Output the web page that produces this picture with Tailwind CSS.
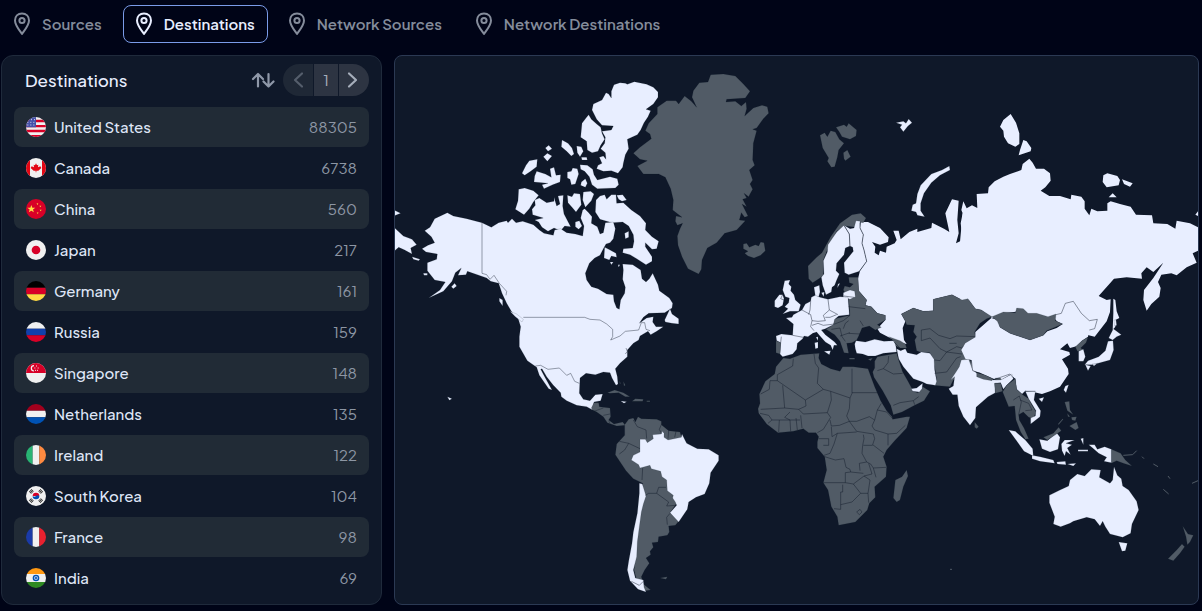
<!DOCTYPE html>
<html lang="en">

<head>
    <meta charset="UTF-8" />
    <meta name="viewport" content="width=device-width, initial-scale=1.0" />
    <title>Destinations</title>
    <script src="https://cdn.jsdelivr.net/npm/@tailwindcss/browser@4"></script>
</head>

<body class="min-h-screen flex flex-col bg-[#000417] font-['Plus_Jakarta_Sans','Inter',sans-serif] pl-px pr-[3px] pt-[5px] pb-[6px]">

    <nav id="tabs" class="flex gap-2 mb-3"></nav>

    <main class="flex-1 grid grid-cols-[381px_1fr] gap-3">

        <section class="rounded-xl border border-[#1f2a3b] bg-[#0f1829] px-3 pt-2 pb-1">
            <div class="flex items-center mb-[11px]">
                <h1 class="flex-1 pl-[11px] text-[17px] leading-8 font-medium text-[#e8eeff]">Destinations</h1>
                <button aria-label="Sort" class="mr-2 text-[#8f98a8]">
                    <svg class="w-6 h-6" viewBox="0 0 24 24" fill="none" stroke="currentColor" stroke-width="2.200" stroke-linecap="round" stroke-linejoin="round">
                        <path d="M7 18.500V6M2 11l5-5 5 5M17.500 6v12.500M12.500 13.500l5 5 5-5" />
                    </svg>
                </button>
                <div class="flex gap-px h-8 rounded-full overflow-hidden text-[#a5adba]">
                    <button aria-label="Previous page" disabled class="w-[30px] flex items-center justify-center bg-[#1f2836] text-[#555e6c]">
                        <svg class="w-5 h-5" viewBox="0 0 20 20" fill="none" stroke="currentColor" stroke-width="2.200" stroke-linecap="round" stroke-linejoin="round"><path d="M14 3.500L7 10l7 6.500" /></svg>
                    </button>
                    <button class="w-6 bg-[#2d3442] text-[15px]">1</button>
                    <button aria-label="Next page" class="w-[30px] flex items-center justify-center bg-[#2d3442]">
                        <svg class="w-5 h-5" viewBox="0 0 20 20" fill="none" stroke="currentColor" stroke-width="2.200" stroke-linecap="round" stroke-linejoin="round"><path d="M5 3.500l7 6.500-7 6.500" /></svg>
                    </button>
                </div>
            </div>
            <ul id="list" class="flex flex-col gap-px"></ul>
        </section>

        <section class="relative rounded-lg border border-[#2b3953] bg-[#0f1829] overflow-hidden">
            <svg class="absolute inset-0 w-full h-full" viewBox="1185 168 2409 1644" role="img" aria-label="World map" stroke-width="1" stroke="#0f1829" stroke-opacity=".45" stroke-linejoin="round">
                <!-- Canadian Arctic -->
                <g transform="translate(1170 150)" fill="#e8eeff">
                    <path d="M672 104L690 98 706 100 712 103 733 95 770 103 790 112 804 126 804 142 790 162 768 178 782 182 774 200 762 218 752 240 742 254 712 268 716 296 706 314 700 340 698 352 684 370 664 362 640 364 620 356 624 346 636 340 628 322 640 318 648 328 646 308 632 296 644 280 646 262 636 244 664 240 670 228 636 226 620 208 606 180 610 162 636 150 648 128 656 132 664 144 664 124Z" />
                    <path d="M596 194L604 208 620 222 632 232 636 250 644 268 632 286 624 304 606 308 592 300 590 274 572 262 576 220 588 204Z" />
                    <path d="M516 270L534 280 546 294 552 312 544 318 530 304 514 290ZM560 288L574 290 580 304 570 320 562 308ZM574 322L590 322 592 330 576 330ZM466 294L476 286 486 296 474 304ZM460 320L472 310 486 318 472 334Z" />
                    <path d="M418 332L442 328 440 350 422 364 404 376 396 370 408 346ZM440 364L466 372 484 382 480 356 492 352 498 376 512 374 510 396 488 404 462 416 456 404 474 400 432 396 434 378Z" />
                    <path d="M532 366L544 364 548 354 562 356 566 372 556 402 544 404 540 388 532 384ZM574 396L586 386 592 400 586 412 572 406Z" />
                    <path d="M570 344L592 346 608 358 612 374 622 390 660 380 682 386 686 404 676 414 622 416 606 404 598 380 584 364 572 358Z" />
                    <path d="M386 418L404 414 430 422 446 436 430 456 418 476 402 494 376 478 384 452Z" />
                    <path d="M434 450L448 444 470 458 492 454 492 442 500 468 510 462 504 438 520 436 518 468 522 492 542 530 524 528 512 542 492 534 474 544 456 532 446 516 434 510 460 504 428 494 426 478 436 466Z" />
                    <path d="M532 436L546 440 552 430 570 432 574 464 558 486 546 472 534 458ZM580 426L602 424 612 432 604 452 586 472 578 450ZM556 516L568 512 576 528 566 538 556 530Z" />
                    <path d="M12 480L32 490 12 498Z" />
                </g>
                <!-- Baffin Island -->
                <g transform="translate(1770 180)" fill="#e8eeff">
                    <path d="M18 420L30 408 44 404 50 418 64 404 78 404 80 430 100 428 124 450 150 468 168 490 166 510 186 530 206 544 200 566 186 568 166 548 166 560 186 590 186 604 168 614 140 596 120 584 98 578 100 566 128 564 132 544 130 524 116 498 98 486 66 488 30 478 16 456Z" />
                    <path d="M80 406L98 404 110 420 96 424 86 418ZM44 562L56 568 78 580 80 592 64 588 58 600 42 594ZM60 606H70L64 614ZM84 614H90L86 622Z" />
                    <path d="M104 520L116 514 116 532 106 536Z" />
                </g>
                <!-- Greenland, Iceland -->
                <g transform="translate(1770 180)" fill="#515b66">
                    <path d="M362 44L400 42 436 48 458 70 480 94 466 114 410 118 408 126 436 124 454 138 468 126 470 146 464 168 490 144 516 136 532 140 536 160 520 176 500 204 488 208 500 212 490 250 488 300 494 316 478 330 488 360 480 372 488 388 480 402 476 410 462 400 470 414 458 418 470 440 456 432 474 468 464 472 454 458 448 480 466 482 440 510 404 520 380 548 352 564 336 600 334 628 326 642 294 626 276 590 264 556 262 528 270 506 278 490 262 496 256 484 258 468 276 472 248 450 250 420 242 386 226 352 206 342 160 342 142 318 172 302 150 298 130 280 150 262 184 236 180 222 166 212 176 190 202 162 202 142 230 122 258 122 266 132 284 108 304 124 320 142 306 112 310 92 328 68 354 66Z" />
                    <path d="M460 552L470 550 478 562 496 554 506 558 512 546 522 548 526 572 512 586 492 594 474 588 464 580 474 574 460 566Z" />
                </g>
                <!-- North and Central America -->
                <g transform="translate(1170 690)" fill="#e8eeff">
                    <path d="M172-52L190-42 230-34 276-22 304-8 326-22 350-28 354-22 366-34 378-22 398-26 430-16 448 0 462 10 490 16 494 0 512-4 530 8 556 12 578 18 582-12 572-36 578-60 584-64 596-52 606-40 604-20 622-10 630 12 640 8 646-22 670-24 676-4 670 26 660 38 648 42 640 56 630 76 614 84 598 100 586 130 590 150 604 170 624 176 650 192 670 194 672 214 680 234 688 238 692 210 704 190 706 172 698 148 700 120 698 102 728 104 752 120 756 146 768 156 778 146 788 130 804 164 808 182 838 204 848 220 846 234 824 248 776 250 760 262 748 280 770 264 790 260 788 276 798 290 820 290 800 304 782 314 774 304 750 318 746 330 730 340 712 360 712 380 690 400 676 416 682 440 684 462 678 466 666 444 660 428 640 426 616 434 588 430 570 444 568 490 580 508 600 512 616 494 638 492 632 512 612 516 608 540 590 530 560 526 530 512 514 500 512 488 490 466 470 440 456 416 452 418 464 440 486 480 476 476 448 436 440 412 412 392 388 350 388 320 392 290 384 264 364 244 350 220 336 190 326 160 302 154 290 144 262 134 232 124 228 134 204 136 214 114 196 128 186 154 160 184 116 204 150 180 166 156 134 150 112 122 112 98 140 88 142 72 108 66 96 56 114 46 134 38 124 20 104 2 120-8 134-34Z" />
                    <path d="M12-8L40 18 66 28 80 44 62 54 66 72 44 60 26 52 12 64ZM184 170L194 160 200 168 190 176ZM66 80L90 88 86 92 70 88ZM100 130H112V136H102ZM328 204L338 210 338 228 328 214ZM360 244L380 252 400 268 396 276 376 260ZM824 270L840 236 846 252 866 266 866 282 846 280 826 276ZM172 500L186 506 178 511ZM692 513L710 515 702 520Z" />
                    <path fill="#515b66" d="M604 534L612 518 626 518 628 530 660 534 662 560 656 570 672 582 698 576 706 586 680 588 652 578 640 560 620 546 608 540ZM652 488L674 480 700 488 720 500 706 500 686 488 660 490ZM726 514L736 506 760 508 758 514ZM770 512H780V515H770ZM688 452L692 460 690 462ZM700 454L706 466 702 468Z" />
                    <path fill="none" stroke-width="3" stroke-opacity=".4" d="M276-22V130L290 134 300 148 312 136 328 160 350 184 348 196M400 262H584L600 268 630 270 650 282 668 298 668 320 662 330 690 318 706 304 746 300 754 278 764 278 768 298 780 302M436 408L452 406 474 418 508 414 530 436 542 430 554 454 568 460M708 354L712 364 706 372M612 544L640 534M640 556L660 552M656 572L660 580" />
                </g>
                <!-- South America -->
                <g transform="translate(1770 1140)" fill="#515b66">
                    <path d="M130 114L136 126 144 110 154 116 200 118 214 124 214 134 236 152 270 156 274 170 286 190 250 260 238 300 260 370 240 398 266 424 256 436 236 438 238 456 232 466 206 470 204 486 186 488 190 502 180 514 182 524 168 534 178 550 164 570 154 590 160 612 182 630 166 632 140 600 132 570 150 400 158 310 130 296 108 272 76 224 80 192 104 166 104 134 116 118ZM210 594L232 590 228 598Z" />
                    <path fill="#e8eeff" d="M150 178L166 178 172 188 190 176 188 164 214 162 216 154 222 160 222 172 234 180 274 172 276 162 286 182 290 190 322 206 356 208 386 226 386 242 362 278 358 310 344 342 318 352 296 366 292 388 266 426 240 398 260 376 256 366 248 354 250 346 232 332 230 300 216 290 212 274 184 266 180 256 150 264 146 254 124 240 130 226 150 216Z" />
                    <path fill="#e8eeff" d="M148 310L157 312 168 348 160 372 154 396 148 440 142 486 140 530 130 570 136 594 160 600 162 622 168 636 144 628 120 602 112 570 116 544 126 490 130 456 142 400 148 340Z" />
                    <path fill="none" stroke-width="3" d="M130 120L142 140 168 150 170 176M88 184L116 190 150 206M116 190L104 210 88 222M158 264L156 300M166 346L176 340 200 340 206 322 228 322M200 340L236 366 230 378 256 376M240 400L230 412 232 434M214 134L208 148 214 160M236 152L234 176M258 154L254 172M160 604L148 616 124 604" />
                </g>
                <!-- Svalbard and Russian Arctic islands -->
                <g transform="translate(2370 240)" fill="#e8eeff">
                    <path fill="#515b66" d="M90 166L104 158 112 170 122 152 136 156 148 178 162 190 146 210 142 232 134 260 124 262 112 244 116 234 98 204ZM138 142L162 134 170 140 176 130 200 150 198 168 180 178 156 170 148 156ZM160 218L172 210 182 230 166 242 162 236Z" />
                    <path d="M478 258L480 270 450 286 424 308 402 340 392 370 392 392 404 410 382 406 378 396 364 392 368 374 378 370 382 342 392 316 424 282 456 270ZM318 128L340 124 348 130 356 117 366 128 354 138 340 155 330 142 336 134Z" />
                </g>
                <!-- Russia -->
                <g fill="#e8eeff" stroke="none">
                    <path transform="translate(2220 600)" d="M362 66L384 66 420 84 446 112 444 126 420 134 396 126 406 140 404 158 416 166 420 152 438 158 440 140 464 130 470 120 460 92 476 92 482 118 508 96 532 86 532 96 574 84 576 68 612 86 628 96 616 40 636-2 656 2 652 60 656 100 648 130 668 120 662 70 668 40 680 30 730 20 740 340 684 296 666 300 636 284 580 298 580 332 550 334 520 324 484 342 496 364 488 384 492 420 500 432 478 428 446 412 420 398 412 386 436 360 436 346 412 340 394 320 376 316 380 300 356 272 354 236 360 212 380 184 372 150 366 130 370 104 360 84Z" />
                    <path transform="translate(2880 300)" d="M8 340L4 330 10 304 20 325 36 316 52 324 50 282 84 280 86 262 104 244 130 230 150 222 184 210 188 192 208 176 218 188 228 206 252 206 270 220 272 242 256 262 242 272 268 288 300 288 332 298 334 284 364 290 374 304 374 326 388 346 394 326 412 334 442 332 442 310 452 304 480 312 512 320 528 344 576 346 580 370 622 372 646 386 650 362 690 370 714 382 714 452 698 460 710 488 680 502 650 526 634 520 604 524 594 546 602 564 598 590 574 612 560 632 550 600 552 570 580 534 610 488 580 516 560 502 544 520 546 536 500 532 462 536 416 588 440 600 452 598 450 636 440 664 404 710 386 706 300 660 204 650 178 634 130 640 96 654 64 630 46 626 26 600 0 600 0 425Z" />
                    <path transform="translate(2880 300)" d="M152 42L168 68 178 100 178 132 166 140 144 130 132 110 130 92 120 80 130 60ZM190 120L200 124 214 144 212 154 176 166 180 150ZM430 226L442 220 472 228 480 240 476 256 440 262 428 246ZM486 238L518 250 510 260 492 252ZM446 292L458 280 470 292ZM714 334L706 344 714 348ZM460 596L466 600 470 634 478 654 466 660 466 680 458 690 460 640Z" />
                </g>
                <!-- Europe and Central Asia -->
                <g transform="translate(2220 600)" fill="#e8eeff">
                    <path fill="#515b66" d="M204 198L230 172 246 158 272 110 300 70 336 44 362 40 378 54 370 68 352 66 348 82 316 78 290 94 262 150 250 180 250 226 240 234 218 248 206 236Z" />
                    <path d="M312 76L328 102 330 138 316 144 312 164 290 190 288 212 298 222 290 240 284 256 276 262 274 276 258 284 248 256 244 232 252 222 250 182 262 156 264 134 290 96ZM294 252L300 250 292 264Z" />
                    <path d="M312 76L330 86 342 84 348 62 360 64 360 84 370 104 366 130 372 150 380 184 358 214 326 224 314 218 312 188 340 154 338 142 330 138 328 102Z" />
                    <path fill="#515b66" d="M326 232L354 232 356 272 380 300 376 316 394 320 412 340 436 346 436 360 412 374 424 382 406 390 388 378 366 384 356 408 350 420 336 428 320 430 326 460 312 458 300 424 284 404 258 388 280 374 284 356 330 346 326 296 310 270 314 258 330 262 340 252 328 248Z" />
                    <path d="M310 278L330 270 344 274 346 290 330 298 310 290ZM222 262L238 256 240 276 236 290 226 288ZM244 278L253 276 251 290Z" />
                    <path d="M226 286L240 292 264 298 300 290 324 292 328 344 296 348 284 358 280 374 256 386 244 390 256 404 284 426 292 436 282 436 278 450 272 436 256 426 240 408 230 396 218 400 204 410 192 408 188 416 172 430 170 448 158 462 128 470 120 462 122 428 110 422 108 408 124 402 158 406 160 372 138 354 156 352 160 344 186 330 196 312 212 304 214 292Z" />
                    <path d="M252 454L272 452 268 464ZM224 428L234 426 234 444 226 446ZM228 412L234 410 234 422ZM134 242L150 240 146 252 154 260 152 272 162 284 166 300 182 314 176 334 150 334 128 342 144 326 134 320 146 308 148 294 136 290 128 270ZM104 320L104 302 118 284 128 284 132 296 128 316 114 324Z" />
                    <path fill="#515b66" d="M108 422L122 428 120 462 108 458ZM446 410L480 422 496 432 500 444 480 444 464 436 462 422ZM384 478L398 474 392 482ZM328 474H344V478H328Z" />
                    <path fill="#515b66" d="M520 324L550 334 580 332 580 298 636 284 666 300 684 296 706 326 724 330 756 350 740 356 720 370 704 396 706 412 696 430 668 440 676 468 690 480 700 500 664 520 640 540 630 560 580 556 590 540 584 500 576 470 570 458 540 456 530 452 524 420 530 410 520 396 524 376 500 374 496 364 484 342Z" />
                    <path d="M344 432L348 422 360 424 376 426 404 418 432 424 462 422 468 440 470 456 430 460 406 468 384 468 368 462 350 460 346 446Z" />
                    <path d="M470 446L482 452 496 446 502 458 530 464 544 456 570 460 582 478 584 510 590 544 586 556 560 552 548 546 520 536 510 524 490 500 476 476Z" />
                    <path fill="none" stroke-width="3" d="M312 76L328 102 330 138M360 68L360 84 370 104 366 130 372 150 380 184 358 214M158 406L190 412M186 330L212 344 216 362 212 380 222 392M212 304L210 330 206 344M216 362L234 364 256 362 250 346 268 330 264 298M268 330L294 344M256 352L270 352 290 344M216 376L234 370 250 376 284 372M326 320L376 326M284 372L310 362 330 346M310 386L316 370 326 362M326 400L360 402M360 362L370 378M274 388L300 384 306 410 316 424M300 408L330 398M124 410L122 428M312 288L342 292M544 422V390L570 386 596 406 630 416 650 408 706 410M544 422L570 414 600 446 620 456 650 440 666 444M628 430H650M584 480L600 482 620 456M584 520L620 516 650 474 662 470M620 456L666 462M460 424L480 444M128 284L122 296 132 300" />
                </g>
                <!-- Africa and Arabia -->
                <g transform="translate(2220 1020)" fill="#515b66">
                    <path d="M412 50L470 40 476 60 488 96 504 124 516 146 518 154 534 158 548 140 570 154 552 182 524 196 486 216 460 224 452 196 428 152 402 112 398 96 404 84 404 64Z" />
                    <path fill="#e8eeff" d="M514 146L530 144 548 130 546 146 538 156 518 154Z" />
                    <path d="M130 54L150 56 182 44 238 40 236 54 244 72 272 86 300 94 308 80 340 80 384 86 392 108 404 140 422 182 440 212 456 230 458 238 500 230 510 230 500 264 464 302 440 330 430 350 440 380 438 410 404 440 406 472 388 490 382 510 346 546 296 556 292 530 274 500 264 450 250 428 260 390 254 350 232 324 232 306 236 290 228 278 206 278 190 266 160 274 114 278 80 252 56 220 54 206 60 190 58 162 76 124 104 102 108 80ZM500 390L504 408 490 440 480 480 470 486 460 474 466 420 486 410Z" />
                    <path fill="none" stroke-width="3" d="M412 92L430 86 444 68 446 48M430 86L460 102 488 100M460 196L480 188 520 182 536 170M520 182L524 194M160 56L158 78 112 104V122L196 180 250 148M112 122H90L88 148 62 162M128 136L134 204 62 208M222 42L226 70 236 84 232 130 250 148 272 154 330 174 336 160V86M336 158H412M272 154L274 180 262 218M196 180L198 198 176 208 190 222 262 218 272 232 250 268 232 278M330 174L328 206 320 228 328 244 298 256 274 258 270 240M328 244L350 244 388 230 404 240 412 210 424 190M328 244L350 274 400 282M404 240L396 258 404 270 444 282 470 280 496 256M412 210L440 216 458 236M444 282V316M400 282L404 296 398 314 432 340M370 284L372 296 368 316 366 340 380 366 358 370 360 392M398 316H370M274 260L276 290 292 280 350 276M292 280L282 312 270 340 252 346M236 296H266V316H250M254 350L286 360 312 356 318 382 330 388 332 396 316 398V428H250M332 396L370 400M316 428L340 432 372 408 396 402 386 370M340 432L362 460 384 460 390 420 372 408M308 434V456H302V508L282 506M302 494L336 486 362 460M384 460L386 488M380 366L392 372 400 384 438 382M400 384L408 412M350 516L360 508 366 516 358 524ZM134 204L176 208M150 216L134 232 150 240 152 274M168 234L172 270M182 226L186 264M60 220L86 226 96 240 84 250M118 240L116 276M96 240H180" />
                </g>
                <!-- East Asia and Oceania -->
                <g transform="translate(2880 960)" fill="#e8eeff">
                    <path stroke="none" d="M94-6L114 0 120 22 150 40 210 60 250 46 262 34 290 24 308 12 290 4 280-16 304-16 316-50 340-56 364-20 388 0 412-4 404 26 386 40 384 50 366 62 352 78 330 84 322 70 300 88 328 96 330 104 306 118 324 146 326 162 300 200 270 214 246 222 230 218 196 212 186 222 170 208 166 176 150 164 126 178 100 176 60 158 36 152 34 120 16 116 4 90 16 70 46 52 46 36 64 20Z" />
                    <path fill="#515b66" d="M96-10L130-24 166-22 170-36 190-34 204-20 230-20 264-10 288-18 286 2 308 12 260 32 250 46 210 60 150 40 120 22 112 4Z" />
                    <path d="M4 120L26 118 38 150 54 162 100 180 126 178 156 162 160 176 140 196 130 208 122 188 104 190 106 218 84 230 48 262 46 294 30 316 10 290-4 258-8 224-22 224-34 206-20 198-16 170-28 180-12 156-2 140Z" />
                    <path fill="#515b66" d="M50 158L76 166 98 176 96 182 70 178 50 170ZM106 174H122V180H106ZM104 190L122 190 128 214 106 220ZM44 306L56 320 50 326 44 322Z" />
                    <path fill="#515b66" d="M166 176L170 208 188 224 206 236 216 256 228 276 220 296 206 292 190 276 176 284 178 300 192 324 206 356 196 358 182 336 168 300 164 258 146 260 128 216 140 196Z" />
                    <path d="M196 214L226 214 222 240 242 272 240 290 212 312 212 294 226 288 228 272 206 236ZM236 236L252 232 246 246ZM316 198L326 194 318 218 311 210Z" />
                    <path fill="#515b66" d="M346 80L366 62 384 52 378 68 362 84 370 90 352 94Z" />
                    <path d="M356 94L370 88 376 110 370 124 356 124ZM460 26L484 44 470 50 458 60 446 54ZM444 64L459 62 461 90 450 120 420 128 398 134 374 134 384 122 416 110 436 92ZM376 134L392 138 384 152ZM396 132L412 130 402 138ZM462 0H468L470 16 464 18Z" />
                    <path fill="#515b66" d="M314 246L328 244 330 270 340 284 322 272ZM328 318L350 306 356 324 346 330ZM334 292L350 290 346 302 336 300ZM322 280L330 290 324 290ZM294 312L308 296 310 298 296 314Z" />
                    <path d="M146 330L166 334 196 360 218 386 220 408 192 394 168 360ZM216 406L240 410 280 420 284 430 240 424 216 416ZM290 426L316 424 318 434 292 432ZM322 432L348 430 340 438ZM238 358L262 362 290 338 300 352 294 388 270 396 246 386ZM304 372L314 360 344 360 318 370 336 374 322 384 332 404 318 394 314 408 306 392ZM362 356L370 354 370 374ZM354 389H384V394H354Z" />
                    <path fill="#515b66" d="M250 352L280 340 296 322 304 332 284 346 262 360ZM454 388L482 400 496 420 516 438 490 430 470 422 454 430Z" />
                    <path d="M386 374L404 374 412 388 434 380 454 388V428L432 424 440 412 416 400 398 384Z" />
                    <path d="M268 526L300 510 326 498 330 480 352 462 374 468 394 448 422 450 418 472 450 490 458 480 462 440 472 466 484 476 488 498 506 510 530 544 536 570 516 612 512 640 488 652 450 642 436 620 428 604 420 618 404 598 380 592 340 604 330 610 302 620 280 612 284 590 268 548ZM476 666L502 670 496 692 486 694Z" />
                    <path fill="#515b66" d="M668 618L684 642 700 646 690 666 682 674 678 650ZM666 672L674 680 660 700 640 722 624 716 650 690Z" />
                    <path fill="none" stroke="#515b66" stroke-opacity="1" stroke-width="3" d="M490 406L518 404 530 392M546 410L552 416M580 432L594 440M624 468L630 476M610 508L626 522M696 490L714 482M-30 748H-24" />
                    <path fill="none" stroke-width="3" d="M160 240L178 228 184 246 176 284M180 240L206 250 216 270 196 272M288-16L304-20 316-50 340-56 364-20 388 2 412-2 404 26 388 30M34 120L38 152 60 160M104 178L150 162 162 176M196 214L226 214" />
                </g>
            </svg>
        </section>
    </main>

    <script>
        const tabs = ['Sources', 'Destinations', 'Network Sources', 'Network Destinations'];

        // each flag is drawn in a 30x30 box and cut to a circle
        const rows = [
            ['United States', 88305, '<path fill="#f0f0f0" d="M0 0h30v30H0z"/><path fill="#d80027" d="M0 4h30v4H0zM0 12h30v3.500H0zM0 19h30v4H0zM0 27h30v3H0z"/><path fill="#4650a8" d="M0 0h15v15.500H0z"/><path stroke="#d5d8f0" stroke-width="1.500" stroke-dasharray="1.500 3" d="M3 4h12M2 8h13M2 12h13"/>'],
            ['Canada', 6738, '<path fill="#f0f0f0" d="M0 0h30v30H0z"/><path fill="#e30613" d="M0 0h6v30H0zM24 0h6v30h-6zM15 8l1.500 3 2-1-.5 4 3.500-1.500 1.500 2.500-4.500 4h-3v2.500h-1V19h-3L7 15l1.500-2.500L12 14l-.5-4 2 1z"/>'],
            ['China', 560, '<path fill="#d80027" d="M0 0h30v30H0z"/><path fill="#ffda44" d="M8 9l1.500 4H14l-3.500 2.800 1.300 4.200L8 17.500 4.200 20l1.300-4.200L2 13h4.500zM16 6l2.500 1-1.500 2zM20 10h3l-1.500 2.500zM20.500 16h3L22 18.500zM16 20.500l2.500-.5-.5 2.500z"/>'],
            ['Japan', 217, '<path fill="#f0f0f0" d="M0 0h30v30H0z"/><circle cx="15" cy="15" r="6.500" fill="#d80027"/>'],
            ['Germany', 161, '<path d="M0 0h30v10H0z"/><path fill="#d80027" d="M0 10h30v10H0z"/><path fill="#ffda44" d="M0 20h30v10H0z"/>'],
            ['Russia', 159, '<path fill="#f0f0f0" d="M0 0h30v10H0z"/><path fill="#1240ab" d="M0 10h30v10H0z"/><path fill="#d80027" d="M0 20h30v10H0z"/>'],
            ['Singapore', 148, '<path fill="#f0f0f0" d="M0 0h30v30H0z"/><path fill="#d80027" d="M0 0h30v15H0z"/><path fill="none" stroke="#f0f0f0" stroke-width="1.800" d="M12 4a4 4 0 1 0 0 8"/><path stroke="#f0f0f0" stroke-width="1.500" d="M15 4.500h1.500M12.500 7.500H14M17.500 7.500H19M13.500 11H15M16.500 11H18"/>'],
            ['Netherlands', 135, '<path fill="#a2001d" d="M0 0h30v10H0z"/><path fill="#f0f0f0" d="M0 10h30v10H0z"/><path fill="#0052b4" d="M0 20h30v10H0z"/>'],
            ['Ireland', 122, '<path fill="#28b473" d="M0 0h10v30H0z"/><path fill="#f0f0f0" d="M10 0h10v30H10z"/><path fill="#ff8a40" d="M20 0h10v30H20z"/>'],
            ['South Korea', 104, '<path fill="#f0f0f0" d="M0 0h30v30H0z"/><path fill="#d80027" d="M10 15a5 5 0 0 1 10 0z"/><path fill="#0052b4" d="M10 15a5 5 0 0 0 10 0c-2-2-4-1-5 0s-3 2-5 0z"/><path stroke="#222" stroke-width="5" stroke-dasharray="1.300 .7" d="M6 10l4-4M6 20l4 4M24 10l-4-4M24 20l-4 4"/>'],
            ['France', 98, '<path fill="#1a3aa8" d="M0 0h10v30H0z"/><path fill="#f0f0f0" d="M10 0h10v30H10z"/><path fill="#e8212f" d="M20 0h10v30H20z"/>'],
            ['India', 69, '<path fill="#ff9811" d="M0 0h30v9H0z"/><path fill="#f0f0f0" d="M0 9h30v12H0z"/><path fill="#2f8a22" d="M0 21h30v9H0z"/><circle cx="15" cy="15" r="4" fill="#a9c3ee" stroke="#0052b4" stroke-width="2"/><circle cx="15" cy="15" r="1.500" fill="#0052b4"/>']
        ];

        document.querySelector('#tabs').innerHTML = tabs.map(name => `
          <button class="flex items-center gap-2 h-[38px] pl-2 pr-3 rounded-lg border text-[15px] leading-6 font-semibold ${name === 'Destinations' ? 'border-[#7a9be8] text-[#e8eeff]' : 'border-transparent text-[#848c9b]'}">
            <svg class="w-6 h-6" viewBox="0 0 24 24" fill="none" stroke="currentColor" stroke-width="2" stroke-linejoin="round">
              <path d="M12 1.500c-4.200 0-7 3-7 7 0 4.500 3.500 8.500 7 13.500 3.500-5 7-9 7-13.500 0-4-2.800-7-7-7z"/>
              <circle cx="12" cy="8.500" r="2.600"/>
            </svg>${name}</button>`).join('');

        document.querySelector('#list').innerHTML = rows.map(([name, count, flag]) => `
          <li class="flex items-center h-10 px-3 rounded-lg text-[15px] odd:bg-[#212b36]">
            <svg class="w-5 h-5 mr-2 rounded-full" viewBox="0 0 30 30">${flag}</svg>
            <span class="flex-1 font-medium text-[#dfe6f7]">${name}</span>
            <span class="text-[#8d96a4]">${count}</span>
          </li>`).join('');
    </script>
</body>

</html>
